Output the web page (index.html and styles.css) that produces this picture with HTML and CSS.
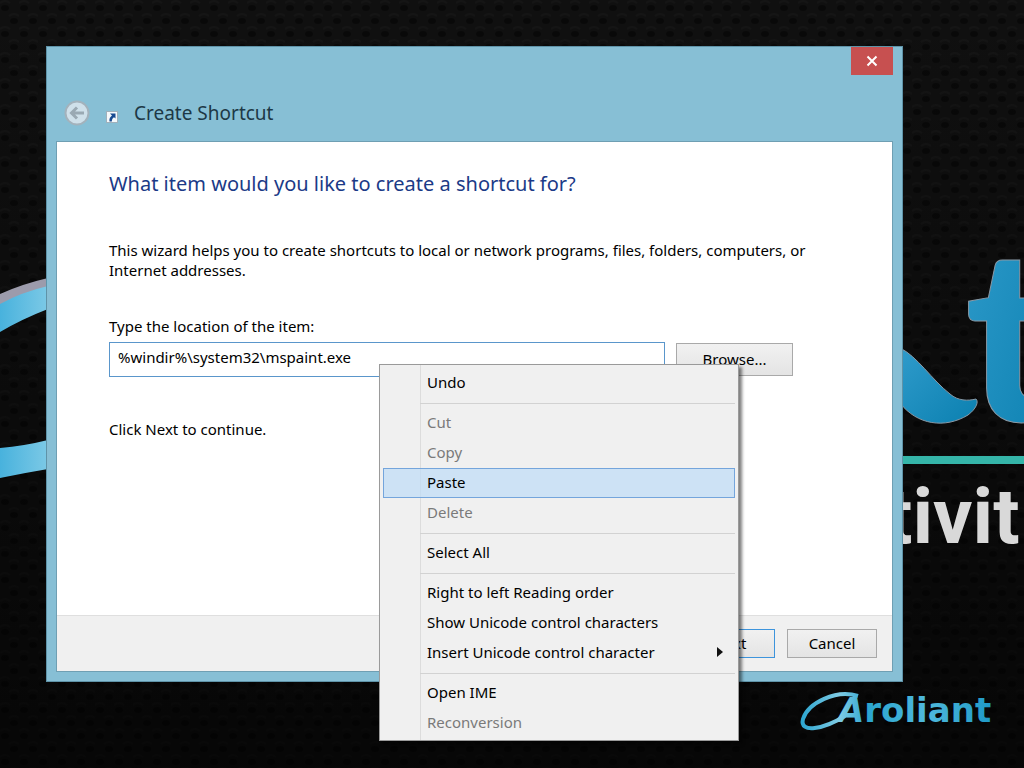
FILE: index.html
```html
<!DOCTYPE html>
<html lang="en">
<head>
<meta charset="utf-8">
<meta name="viewport" content="width=device-width, initial-scale=1">
<title>Create Shortcut</title>
<link rel="stylesheet" href="styles.css">
</head>
<body>
<div class="desktop">
  <svg class="wallpaper" viewBox="0 0 1024 768" preserveAspectRatio="xMinYMin slice" aria-hidden="true">
    <defs>
      <pattern id="mesh" width="19" height="26" patternUnits="userSpaceOnUse">
        <rect width="19" height="26" fill="#101010"/>
        <path d="M0 3q5-4 10 0M9 16q5-4 10 0" stroke="#151515" stroke-width="2" fill="none"/>
        <ellipse cx="5" cy="8" rx="4" ry="3" fill="#090909"/>
        <ellipse cx="14" cy="21" rx="4" ry="3" fill="#090909"/>
      </pattern>
      <linearGradient id="shade" x1="0" y1="0" x2="0" y2="1">
        <stop offset="0" stop-color="#000" stop-opacity="0"/>
        <stop offset="1" stop-color="#000" stop-opacity=".6"/>
      </linearGradient>
      <linearGradient id="blue" x1="0" y1="0" x2="1" y2="1">
        <stop offset="0" stop-color="#2f9bcb"/>
        <stop offset="1" stop-color="#0b80b0"/>
      </linearGradient>
      <linearGradient id="band" x1="0" y1="0" x2="1" y2="0">
        <stop offset="0" stop-color="#48b2dd"/>
        <stop offset="1" stop-color="#7cc9e6"/>
      </linearGradient>
      <linearGradient id="ink" x1="800" y1="0" x2="996" y2="0" gradientUnits="userSpaceOnUse">
        <stop offset="0" stop-color="#2aa5d0"/>
        <stop offset=".2" stop-color="#7fcbe4"/>
        <stop offset=".35" stop-color="#2ba5cf"/>
        <stop offset=".65" stop-color="#4fb9dc"/>
        <stop offset="1" stop-color="#1b97c4"/>
      </linearGradient>
    </defs>
    <rect width="1024" height="768" fill="url(#mesh)"/>
    <rect width="1024" height="768" fill="url(#shade)"/>
    <path d="M0 294Q22 284 48 278V290Q22 295 0 306Z" fill="#9c9bab"/>
    <path d="M0 304Q22 292 48 286V309Q22 319 0 332Z" fill="url(#band)"/>
    <path d="M0 448Q24 446 48 440V469Q24 473 0 478Z" fill="url(#band)"/>
    <path d="M900 348C917 356 932 380 950 394C958 401 968 401 976 399C979 402 976 409 968 415C945 429 917 425 900 403Z" fill="url(#blue)" stroke="#8998a5"/>
    <text class="art-t" x="965" y="421">t</text>
    <rect x="900" y="456" width="124" height="8" fill="#35b5a9"/>
    <text class="art-word" x="886" y="543">tivit</text>
    <path d="M858 696C836 689 808 703 803 719C799 734 824 729 845 716" fill="none" stroke="url(#ink)" stroke-width="4"/>
    <text class="brand" x="838" y="722"><tspan class="brand-initial">A</tspan>roliant</text>
  </svg>

  <main class="window">
    <header class="titlebar">
      <button class="close" type="button" aria-label="Close">
        <svg width="12" height="12" viewBox="0 0 12 12"><path d="M1.500 1.500L10.500 10.500M10.500 1.500L1.500 10.500" stroke="#fff" stroke-width="2"/></svg>
      </button>
      <button class="back" type="button" aria-label="Back" disabled>
        <svg width="26" height="26" viewBox="0 0 26 26"><circle cx="13" cy="13" r="11.500" fill="#cfe0ea" stroke="#a3b2bc" stroke-width="2"/><path d="M20 13H8M13 7.500L7.500 13L13 18.500" fill="none" stroke="#9aa9b3" stroke-width="3"/></svg>
      </button>
      <svg class="shortcut-icon" width="12" height="12" viewBox="0 0 12 12" aria-hidden="true"><rect x=".5" y=".5" width="11" height="11" fill="#f4f8fb" stroke="#9fb0bb"/><path d="M4 2.500H9.500V7.500L8 6.200C6.500 7.200 5.800 8.500 5.800 10.500H3.500C3 7.800 4 6 6 4.500Z" fill="#174a91"/></svg>
      <h1 class="title">Create Shortcut</h1>
    </header>
    <form class="client">
      <div class="page">
        <h2 class="question">What item would you like to create a shortcut for?</h2>
        <p class="intro">This wizard helps you to create shortcuts to local or network programs, files, folders, computers, or Internet addresses.</p>
        <label class="label" for="location">Type the location of the item:</label>
        <div class="field">
          <input class="input" id="location" type="text" value="%windir%\system32\mspaint.exe" spellcheck="false">
          <button class="btn browse" type="button">Browse...</button>
        </div>
        <p class="hint">Click Next to continue.</p>
      </div>
      <footer class="actions">
        <button class="btn primary" type="button">Next</button>
        <button class="btn" type="button">Cancel</button>
      </footer>
    </form>
  </main>

  <div class="menu" role="menu">
    <button class="item" type="button" role="menuitem">Undo</button>
    <hr class="sep">
    <button class="item" type="button" role="menuitem" disabled>Cut</button>
    <button class="item" type="button" role="menuitem" disabled>Copy</button>
    <button class="item active" type="button" role="menuitem">Paste</button>
    <button class="item" type="button" role="menuitem" disabled>Delete</button>
    <hr class="sep">
    <button class="item" type="button" role="menuitem">Select All</button>
    <hr class="sep">
    <button class="item" type="button" role="menuitem">Right to left Reading order</button>
    <button class="item" type="button" role="menuitem">Show Unicode control characters</button>
    <button class="item" type="button" role="menuitem">Insert Unicode control character
      <svg width="6" height="10" viewBox="0 0 6 10" aria-hidden="true"><path d="M0 0L6 5L0 10Z" fill="#111"/></svg>
    </button>
    <hr class="sep">
    <button class="item" type="button" role="menuitem">Open IME</button>
    <button class="item" type="button" role="menuitem" disabled>Reconversion</button>
  </div>
</div>
</body>
</html>
```
FILE: styles.css
```css
* { box-sizing: border-box; }
body {
  margin: 0;
  background: #0b0b0b;
  color: #000;
  font: 15px/20px "Noto Sans", "Open Sans", sans-serif;
}
button, input { font: inherit; color: inherit; }
h1, h2, p { margin: 0; font-weight: 400; }

.desktop {
  position: relative;
  display: flex;
  min-height: 100vh;
  padding: 46px 121px 86px 46px;
  overflow: hidden;
}
.wallpaper {
  position: absolute;
  inset: 0;
  width: 100%;
  height: 100%;
}
.art-t {
  font: 900 240px Lato, sans-serif;
  fill: url(#blue);
  stroke: #8998a5;
}
.art-word {
  font: 700 78px Roboto, sans-serif;
  fill: #d9d9d9;
}
.brand {
  font: 700 34px "DejaVu Sans", sans-serif;
  fill: url(#ink);
}
.brand-initial { font-style: italic; }

.window {
  position: relative;
  display: flex;
  flex: 1;
  flex-direction: column;
  padding: 0 9px 9px;
  background: #87bfd5;
  border: 1px solid #5f93a8;
}
.titlebar {
  display: grid;
  grid-template-columns: 26px 12px 1fr 42px;
  grid-template-rows: 28px 66px;
  column-gap: 16px;
  align-items: center;
  padding-left: 8px;
}
.close {
  grid-column: 4;
  display: grid;
  place-items: center;
  height: 28px;
  padding: 0;
  background: #c75050;
  border: 0;
}
.back {
  grid-row: 2;
  width: 26px;
  height: 26px;
  margin-top: 10px;
  padding: 0;
  background: none;
  border: 0;
}
.shortcut-icon { grid-row: 2; margin-top: 18px; }
.title {
  grid-row: 2;
  margin-top: 10px;
  color: #1d3846;
  font-size: 19px;
  line-height: 28px;
}

.client {
  display: flex;
  flex: 1;
  flex-direction: column;
  background: #fff;
  border: 1px solid #6f9fb3;
}
.page { flex: 1; padding: 28px 52px 16px; }
.question {
  color: #1b3a87;
  font-size: 20px;
  line-height: 28px;
}
.intro { margin-top: 42px; }
.label { display: block; margin-top: 36px; }
.field {
  display: flex;
  gap: 11px;
  margin-top: 6px;
  padding-right: 47px;
}
.input {
  flex: 1;
  min-width: 0;
  height: 35px;
  padding: 0 8px 6px;
  background: #fff;
  border: 1px solid #5a96cb;
  border-radius: 0;
  outline: 0;
}
.hint { margin-top: 42px; }
.actions {
  display: flex;
  justify-content: flex-end;
  gap: 12px;
  padding: 13px 15px;
  background: #f0f0f0;
  border-top: 1px solid #dfdfdf;
}
.btn {
  width: 90px;
  height: 29px;
  padding: 0 0 2px;
  background: linear-gradient(#f1f1f1, #e4e4e4);
  border: 1px solid #a9a9a9;
}
.primary { border-color: #3d94dc; }
.browse { width: 117px; height: 33px; margin-top: 1px; }

.menu {
  position: absolute;
  top: 364px;
  left: 379px;
  display: flex;
  flex-direction: column;
  width: 360px;
  padding: 3px 3px 2px;
  background: linear-gradient(90deg, transparent 40px, #dcdcdc 40px, #dcdcdc 41px, transparent 41px) #f0f0f0;
  border: 1px solid #9a9a9a;
  box-shadow: 3px 3px 3px rgba(0, 0, 0, .5);
}
.item {
  display: flex;
  align-items: center;
  justify-content: space-between;
  height: 30px;
  padding: 0 11px 2px 43px;
  background: none;
  border: 1px solid transparent;
  text-align: left;
}
.item:disabled { color: #7a7a7a; }
.item.active {
  background: rgba(190, 219, 246, .7);
  border-color: #74a5dc;
}
.sep {
  width: calc(100% - 37px);
  height: 1px;
  margin: 5px 0 4px 37px;
  background: #d2d2d2;
  border: 0;
}
```
